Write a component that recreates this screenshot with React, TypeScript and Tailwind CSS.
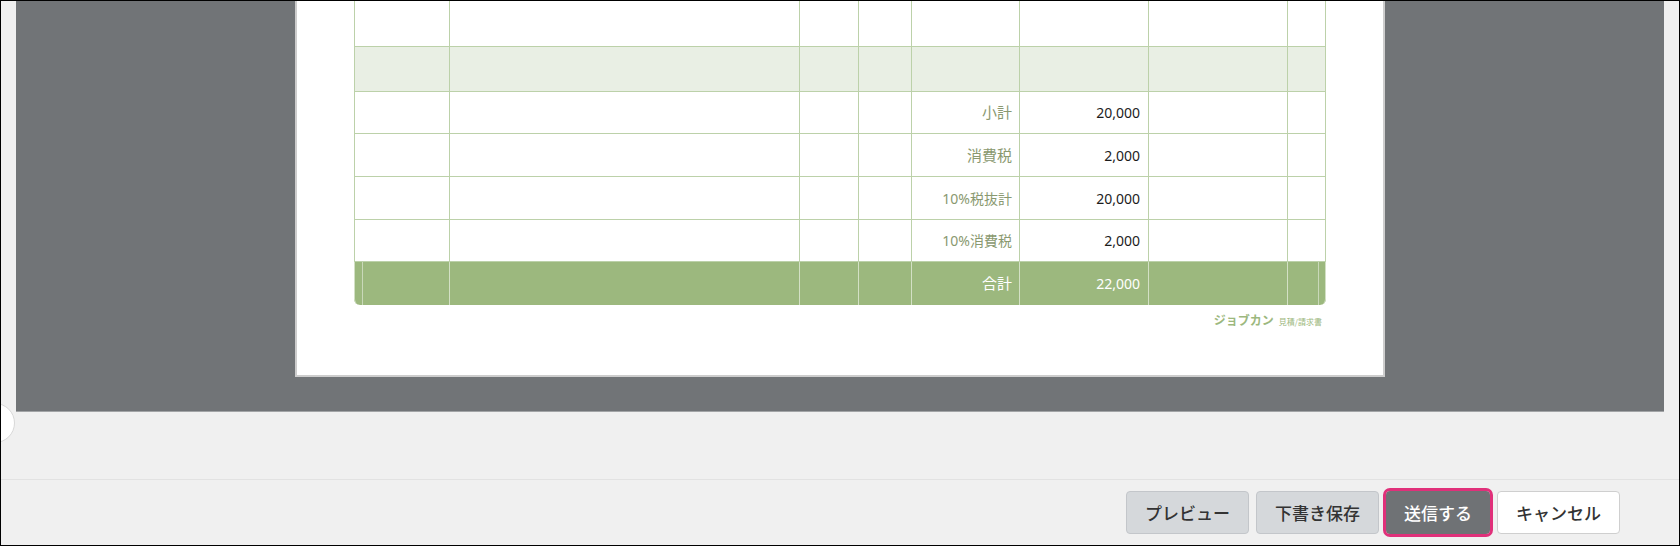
import React from 'react';

const COLS = [95, 350, 59, 53, 108, 129, 139, 39];

type Row = {
  h: number;
  kind: 'blank' | 'band' | 'sum' | 'total';
  label?: string;
  value?: string;
  small?: boolean;
};

const ROWS: Row[] = [
  { h: 46, kind: 'blank' },
  { h: 46, kind: 'blank' },
  { h: 45, kind: 'band' },
  { h: 42, kind: 'sum', label: '小計', value: '20,000' },
  { h: 43, kind: 'sum', label: '消費税', value: '2,000' },
  { h: 43, kind: 'sum', label: '10%税抜計', value: '20,000', small: true },
  { h: 42, kind: 'sum', label: '10%消費税', value: '2,000', small: true },
  { h: 44, kind: 'total', label: '合計', value: '22,000' },
];

const TableRow = ({ row }: { row: Row }) => {
  const total = row.kind === 'total';
  const bg = total ? 'bg-[#9cb87e] rounded-b-[6px]' : row.kind === 'band' ? 'bg-[#e9efe4]' : 'bg-white';
  const line = total ? 'border-[#d3e0c5]' : 'border-[#bcd1a9]';
  return (
    <div className={`flex border-t border-[#bcd1a9] ${bg}`} style={{ height: row.h }}>
      {COLS.map((w, i) => (
        <div
          key={i}
          className={`relative flex items-center justify-end border-l ${line} ${i === COLS.length - 1 ? 'border-r' : ''} ${
            total && i === 0 ? 'rounded-bl-[6px]' : ''
          } ${total && i === COLS.length - 1 ? 'rounded-br-[6px]' : ''}`}
          style={{ width: w }}
        >
          {total && i === 0 && <span className="absolute left-[7px] top-0 bottom-0 border-l border-[#c9d8b9]" />}
          {total && i === COLS.length - 1 && <span className="absolute right-[6px] top-0 bottom-0 border-l border-[#c9d8b9]" />}
          {i === 4 && row.label && (
            <span
              className={`pr-[7px] ${row.small ? 'text-[14px]' : 'text-[15px]'} ${total ? 'text-white' : 'text-[#8a9970]'}`}
              style={{ fontFamily: '"Noto Sans", "Noto Sans CJK JP", sans-serif' }}
            >
              {row.label}
            </span>
          )}
          {i === 5 && row.value && (
            <span
              className={`pr-[8px] text-[14px] ${total ? 'text-white' : 'text-[#1c1c1c]'}`}
              style={{ fontFamily: '"Noto Sans", "Noto Sans CJK JP", sans-serif' }}
            >
              {row.value}
            </span>
          )}
        </div>
      ))}
    </div>
  );
};

const Button = ({ children, kind }: { children: React.ReactNode; kind: 'gray' | 'primary' | 'white' }) => {
  const cls =
    kind === 'gray'
      ? 'w-[123px] bg-[#d5d8db] border border-[#c3c6ca] text-[#333]'
      : kind === 'primary'
      ? 'w-[104px] bg-[#6f7275] text-white outline-[3px] outline-solid outline-[#e0307a]'
      : 'w-[123px] bg-white border border-[#cfcfcf] text-[#333]';
  return (
    <button
      className={`h-[43px] rounded-[4px] text-[17px] font-medium ${cls}`}
      style={{ fontFamily: '"Noto Sans CJK JP", sans-serif' }}
    >
      {children}
    </button>
  );
};

export default function App() {
  return (
    <div className="relative w-[1680px] h-[546px] border border-black bg-[#f0f0f0] flex flex-col overflow-hidden">
      {/* preview area */}
      <div className="mx-[15px] h-[411px] bg-[#717477] border-b border-[#a2a4a6] flex flex-col justify-end overflow-hidden pb-[34px]">
        <div className="ml-[279px] w-[1090px] shrink-0 bg-white border-x-2 border-b-2 border-[#cdcdcd] px-[57px] pb-[45px]">
          <div className="flex flex-col">
            {ROWS.map((r, i) => (
              <TableRow key={i} row={r} />
            ))}
          </div>
          <div className="flex justify-end items-baseline gap-[5px] pt-[7px] pr-[4px] text-[#9cb87e]" style={{ fontFamily: '"Noto Sans CJK JP", sans-serif' }}>
            <span className="text-[12px] font-bold leading-[16px]">ジョブカン</span>
            <span className="text-[8px] leading-[16px]">見積/請求書</span>
          </div>
        </div>
      </div>

      <div className="h-[67px]" />

      {/* footer */}
      <div className="flex-1 border-t border-[#e2e2e2] flex justify-end gap-[7px] pt-[11px] pr-[59px]">
        <Button kind="gray">プレビュー</Button>
        <Button kind="gray">下書き保存</Button>
        <Button kind="primary">送信する</Button>
        <Button kind="white">キャンセル</Button>
      </div>

      {/* side toggle */}
      <div className="absolute left-[-26px] top-[402px] w-[40px] h-[40px] rounded-full bg-white border border-[#d8d8d8]" />
    </div>
  );
}
